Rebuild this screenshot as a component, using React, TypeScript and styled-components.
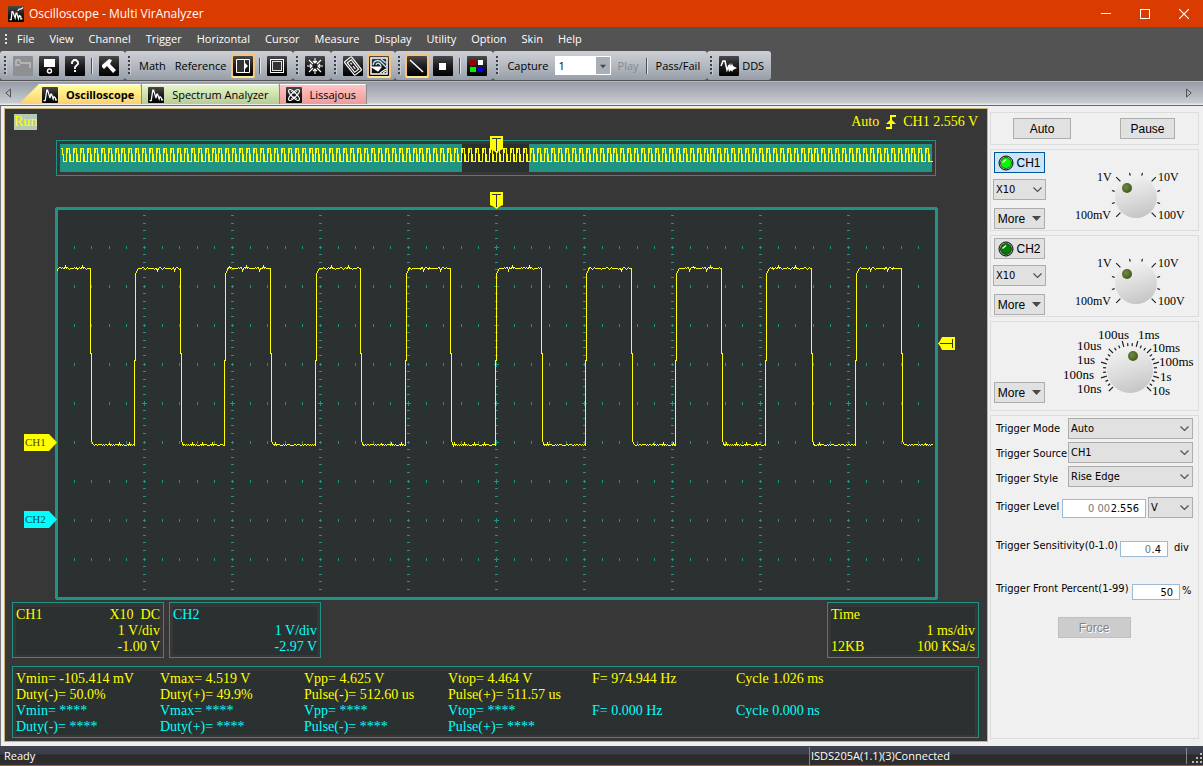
import React from "react";
import styled, { createGlobalStyle } from "styled-components";

const UI = `"Open Sans", "Noto Sans", sans-serif`;
const PANEL = `"DejaVu Sans Condensed", "DejaVu Sans", sans-serif`;
const SANS = `"Liberation Sans", Arial, sans-serif`;
const SERIF = `"Liberation Serif", "Times New Roman", serif`;
const TEAL = "#209384";
const YELLOW = "#ffff00";
const CYAN = "#00ffff";
const PLOT = "#2b3030";
const SCOPE = "#373737";

const GlobalStyle = createGlobalStyle`
  *, *::before, *::after { box-sizing: border-box; }
  body { margin: 0; background: #f0f0f0; font-family: ${UI}; font-size: 11px; color: #000; }
  button, input, select { font: inherit; color: inherit; margin: 0; padding: 0; }
`;

/* ---------- window chrome ---------- */

const Window = styled.div`
  display: flex;
  flex-direction: column;
  min-height: 100vh;
`;

const TitleBar = styled.header`
  display: flex;
  align-items: center;
  height: 27px;
  padding-left: 8px;
  background: #da3b01;
  color: #fff;
`;

const Title = styled.h1`
  flex: 1;
  margin: 0 0 0 5px;
  font-size: 12px;
  font-weight: 400;
  line-height: 16px;
`;

const CaptionButton = styled.button`
  display: flex;
  align-items: center;
  justify-content: center;
  width: 39px;
  height: 27px;
  border: 0;
  background: none;
`;

const MenuBar = styled.nav`
  display: flex;
  align-items: center;
  height: 24px;
  padding-left: 5px;
  background: #535353;
`;

const MenuItem = styled.button`
  height: 20px;
  padding: 0 8px 0 7px;
  border: 0;
  background: none;
  color: #fff;
  font-size: 11px;
  line-height: 20px;
`;

const Grip = styled.span<{ $light?: boolean }>`
  width: 3px;
  height: ${(p) => (p.$light ? 11 : 19)}px;
  margin-right: ${(p) => (p.$light ? 2 : 3)}px;
  background: repeating-linear-gradient(
    to bottom,
    ${(p) => (p.$light ? "#e4e4e4" : "#3c3f44")} 0 2px,
    transparent 2px 4px
  );
  border-right: 1px solid ${(p) => (p.$light ? "#535353" : "#c6cad0")};
`;

/* ---------- tool bar ---------- */

const ToolBar = styled.div`
  display: flex;
  height: 30px;
  padding-bottom: 1px;
  background: #535353;
`;

const ToolGroup = styled.div`
  display: flex;
  align-items: center;
  padding: 0 3px;
  border-radius: 3px;
  background: linear-gradient(#cdd0d5, #b4b9c1 50%, #989ea8);

  &:first-child { padding-left: 4px; }
  &:last-child { padding-right: 7px; }
`;

const ToolButton = styled.button<{ $on?: boolean }>`
  display: flex;
  align-items: center;
  justify-content: center;
  width: 24px;
  height: 24px;
  margin: 0 1px;
  border: ${(p) => (p.$on ? "2px solid #f6c27c" : "0")};
  border-bottom-color: #ffe68c;
  border-radius: 2px;
  background: ${(p) => (p.$on ? "#ffe0a0" : "none")};

  svg { flex: none; display: block; }
`;

const TextButton = styled.button<{ $tight?: boolean }>`
  height: 22px;
  padding: ${(p) => (p.$tight ? "0" : "0 4px 0 5px")};
  border: 0;
  background: none;
  font-size: 11px;
  white-space: nowrap;

  &:disabled { color: #85898f; }
`;

const Separator = styled.span`
  width: 2px;
  height: 16px;
  margin: 0 3px;
  background: #4b4e53;
  border-right: 1px solid #e0e3e7;
`;

const CaptureBox = styled.span`
  display: flex;
  width: 56px;
  height: 19px;
  margin: 0 2px;
  border: 1px solid #fff;
  background: #fff;

  input {
    flex: 1;
    min-width: 0;
    padding-left: 3px;
    border: 0;
    outline: 0;
    background: none;
    font-size: 11px;
  }

  button {
    display: flex;
    justify-content: center;
    width: 14px;
    padding-top: 7px;
    border: 0;
    background: #a9afb7;
  }
`;

/* ---------- tabs ---------- */

const TabStrip = styled.div`
  display: flex;
  align-items: flex-end;
  height: 25px;
  padding: 0 3px 1px 5px;
  border-top: 1px solid #b4b7bb;
  border-bottom: 1px solid #66686c;
  background: linear-gradient(#969ca6, #c9ccd1 21px, #e8eaec 22px);
`;

const ScrollButton = styled.button`
  display: flex;
  align-items: center;
  width: 14px;
  height: 23px;
  border: 0;
  background: none;
`;

const Tab = styled.button<{ $from: string; $to: string; $active?: boolean }>`
  display: flex;
  align-items: center;
  height: 20px;
  padding: ${(p) => (p.$active ? "0 7px 0 23px" : "0 10px 0 6px")};
  border: 0;
  border-top: 1px solid #fff;
  border-right: 1px solid #85888d;
  border-radius: 0 3px 0 0;
  background: linear-gradient(${(p) => p.$from}, ${(p) => p.$to});
  clip-path: ${(p) =>
    p.$active ? "polygon(20px 0, 100% 0, 100% 100%, 0 100%)" : "none"};
  font-size: 11px;
  font-weight: ${(p) => (p.$active ? 700 : 400)};
  white-space: nowrap;

  svg { margin-right: 8px; }
`;

const TabSpace = styled.span`
  flex: 1;
`;

/* ---------- scope ---------- */

const Main = styled.main`
  display: flex;
  flex: 1;
  padding: 2px 0 4px 3px;
  border-left: 1px solid #77797d;
  background: #f0f0f0;
`;

const Scope = styled.section`
  display: flex;
  flex: 1;
  flex-direction: column;
  min-width: 0;
  padding-bottom: 3px;
  border: 1px solid #c9b27c;
  background: ${SCOPE};
  color: ${YELLOW};
  font-family: ${SERIF};
  font-size: 14px;
  line-height: 16px;
`;

const ScopeHeader = styled.div`
  display: flex;
  align-items: center;
  justify-content: space-between;
  height: 25px;
  padding: 0 9px;
`;

const RunState = styled.span`
  background: #b6c9b2;
`;

const TriggerState = styled.span`
  display: flex;
  align-items: center;
  gap: 7px;
`;

const Chart = styled.svg`
  display: block;
  width: 100%;
  height: auto;
  font-family: ${SERIF};
`;

const Readouts = styled.div`
  display: flex;
  gap: 5px;
  padding: 0 8px 8px 7px;
`;

const Readout = styled.div<{ $color: string; $last?: boolean }>`
  display: grid;
  grid-template-columns: auto 1fr;
  grid-template-rows: repeat(3, 16px);
  width: 152px;
  margin-left: ${(p) => (p.$last ? "auto" : "0")};
  padding: 4px 3px 2px;
  border: 1px solid ${TEAL};
  background: ${PLOT} content-box;
  color: ${(p) => p.$color};
  white-space: pre;

  span:nth-child(even) { text-align: right; }
`;

const Measurements = styled.div`
  margin: 0 8px 0 7px;
  padding: 4px 3px 2px;
  border: 1px solid ${TEAL};
  background: ${PLOT} content-box;
`;

const MeasureTable = styled.table`
  width: 100%;
  border-collapse: collapse;
  table-layout: fixed;
  white-space: nowrap;

  td { padding: 0; width: 144px; }
  td:last-child { width: auto; }
`;

const MeasureRow = styled.tr<{ $color: string }>`
  height: 16px;
  color: ${(p) => p.$color};
`;

/* ---------- control panel ---------- */

const Panel = styled.aside`
  display: flex;
  flex: none;
  flex-direction: column;
  gap: 4px;
  width: 215px;
  padding: 4px 4px 3px 2px;
  font-family: ${PANEL};
  font-size: 11px;
`;

const Group = styled.section<{ $grow?: boolean }>`
  display: flex;
  flex: ${(p) => (p.$grow ? 1 : "none")};
  flex-direction: ${(p) => (p.$grow ? "column" : "row")};
  justify-content: ${(p) => (p.$grow ? "flex-start" : "space-between")};
  border: 1px solid #dcdcdc;
`;

const RunGroup = styled(Group)`
  padding: 5px 23px 5px 22px;
`;

const PushButton = styled.button<{ $width: number; $on?: boolean }>`
  display: flex;
  align-items: center;
  justify-content: center;
  gap: 2px;
  width: ${(p) => p.$width}px;
  height: 21px;
  border: 1px solid ${(p) => (p.$on ? "#00559b" : "#adadad")};
  background: ${(p) => (p.$on ? "#cce4f7" : "#e1e1e1")};
  font-family: ${SANS};
  font-size: 12px;
  line-height: 16px;

  &:disabled {
    border-color: #bfbfbf;
    background: #cccccc;
    color: #838383;
    text-shadow: 1px 1px 0 #fff;
  }
`;

const MoreButton = styled(PushButton)`
  gap: 7px;
  margin-top: 2px;
`;

const SideColumn = styled.div<{ $end?: boolean }>`
  display: flex;
  flex-direction: column;
  justify-content: ${(p) => (p.$end ? "flex-end" : "flex-start")};
  align-items: center;
  gap: 6px;
  padding: ${(p) => (p.$end ? "0 0 7px 3px" : "2px 0 0 2px")};
`;

const SelectBox = styled.span<{ $width: number }>`
  display: grid;
  align-items: center;
  width: ${(p) => p.$width}px;
  height: 21px;

  select, svg { grid-area: 1 / 1; }

  select {
    appearance: none;
    width: 100%;
    height: 21px;
    padding: 0 16px 0 2px;
    border: 1px solid #adadad;
    border-radius: 0;
    background: #e1e1e1;
    outline: 0;
  }

  svg {
    justify-self: end;
    margin-right: 4px;
    pointer-events: none;
  }
`;

const Dial = styled.svg`
  display: block;
  margin-right: 1px;
  font-family: ${SERIF};
`;

const TriggerGrid = styled.div`
  display: flex;
  justify-content: space-between;
  padding: 2px 5px 0;
`;

const LabelStack = styled.div`
  display: flex;
  flex-direction: column;
  gap: 9px;
  padding-top: 3px;
`;

const SelectStack = styled.div`
  display: flex;
  flex-direction: column;
  gap: 3px;
`;

const Label = styled.label`
  line-height: 16px;
  white-space: nowrap;
`;

const FieldRow = styled.div<{ $space: number }>`
  display: flex;
  align-items: flex-end;
  gap: 2px;
  margin-top: ${(p) => p.$space}px;
  padding: 0 5px;

  ${Label} {
    margin-right: auto;
    padding-bottom: 3px;
  }
`;

const NumberBox = styled.span<{ $width: number; $tall?: boolean }>`
  display: flex;
  align-items: center;
  justify-content: flex-end;
  width: ${(p) => p.$width}px;
  height: ${(p) => (p.$tall ? 19 : 16)}px;
  padding-right: 6px;
  border: 1px solid #9db9d6;
  background: #fff;
  color: #777;

  input {
    border: 0;
    outline: 0;
    background: none;
    color: #000;
    text-align: right;
  }
`;

const Unit = styled.span<{ $wide?: boolean }>`
  width: ${(p) => (p.$wide ? 23 : 11)}px;
  padding-left: ${(p) => (p.$wide ? 4 : 0)}px;
  line-height: 18px;
`;

const ForceRow = styled.div`
  display: flex;
  justify-content: center;
  margin: 17px 1px 0 0;
`;

/* ---------- status bar ---------- */

const StatusBar = styled.footer`
  display: flex;
  align-items: center;
  height: 20px;
  padding: 1px 0 0 4px;
  border-bottom: 1px solid #c8512b;
  background: linear-gradient(#42444f, #3a3c47 8px, #2a2a2a 9px, #2f2f2f);
  color: #fff;
  font-size: 11px;
  line-height: 18px;
`;

const StatusMessage = styled.span`
  flex: 1;
`;

const StatusDevice = styled.span`
  width: 377px;
  padding-left: 1px;
  border-left: 1px solid #85868c;
`;

const StatusCorner = styled.span`
  display: flex;
  align-items: flex-end;
  justify-content: flex-end;
  width: 17px;
  height: 16px;
  border-left: 1px solid #85868c;
`;

/* ---------- icons ---------- */

const Tile = ({ size = 20, faded, children }: { size?: number; faded?: boolean; children: React.ReactNode }) => (
  <svg width={size} height={size} viewBox="0 0 20 20" fill="none" stroke="#fff" strokeWidth="1.4" aria-hidden="true">
    <defs>
      <linearGradient id="tile" x1="0" y1="0" x2="0" y2="1">
        <stop offset="0" stopColor="#4a4a4a" />
        <stop offset="0.5" stopColor="#1d1d1d" />
        <stop offset="1" stopColor="#000" />
      </linearGradient>
    </defs>
    <rect width="20" height="20" rx="1" fill={faded ? "#8f9091" : "url(#tile)"} stroke="none" />
    {children}
  </svg>
);

const SpectrumIcon = ({ size = 16 }: { size?: number }) => (
  <Tile size={size}>
    <path d="M2 17H4L6 4H7L10 14L11 9H12L14 15L15 12L17 14V16H19" strokeWidth="1.5" />
  </Tile>
);

const LogoIcon = () => (
  <Tile size={16}>
    <path d="M2 17H4L5 7H6L9 15L10 9H11L13 16L14 12L16 13V16H18M12 6L14 4H16L19 2" strokeWidth="1.5" />
  </Tile>
);

const OpenIcon = () => (
  <Tile faded>
    <path d="M3 4H6L8 7H17V12M3 4V9H7" stroke="#b3b4b6" strokeWidth="2" />
  </Tile>
);
const SaveIcon = () => (
  <Tile>
    <rect x="5" y="3" width="11" height="8" fill="#fff" stroke="none" />
    <circle cx="10.500" cy="15" r="2" />
  </Tile>
);
const HelpIcon = () => (
  <Tile>
    <path d="M7 8V6L9 4H11L13 6V8L10 11V13" strokeWidth="1.8" />
    <rect x="9" y="14" width="2" height="2" fill="#fff" stroke="none" />
  </Tile>
);
const HammerIcon = () => (
  <Tile>
    <path d="M3 11L3 9L10 3L13 4L12 6L11 8L17 14L14 17L8 10L5 13Z" fill="#fff" stroke="none" />
  </Tile>
);
const ReferenceIcon = () => (
  <Tile>
    <path d="M4 4H11V16H4Z" fill="#333" stroke="none" />
    <path d="M3.500 3.500H16.500V16.500H3.500ZM11.500 3.500V16.500" strokeWidth="1" />
    <path d="M12 7L15 10L12 13Z" fill="#fff" stroke="none" />
  </Tile>
);
const FrameIcon = () => (
  <Tile>
    <rect x="3.500" y="3.500" width="13" height="13" strokeWidth="1" />
    <rect x="5.500" y="5.500" width="9" height="9" stroke="#ddd" strokeWidth="1" fill="#333" />
  </Tile>
);
const CenterIcon = () => (
  <Tile>
    <path
      d="M10 2V7M10 13V18M2 10H7M13 10H18M4 4L8 8M16 4L12 8M4 16L8 12M16 16L12 12M8 5L10 7L12 5M8 15L10 13L12 15M5 8L7 10L5 12M15 8L13 10L15 12"
      strokeWidth="1.100"
    />
  </Tile>
);
const RulerIcon = () => (
  <Tile>
    <g transform="rotate(-38 10 10)" strokeWidth="1.200">
      <rect x="5.500" y="1.500" width="9" height="17" rx="1" />
      <rect x="7.500" y="4" width="5" height="12" />
      <path d="M10 6V8M10 10V14" />
    </g>
  </Tile>
);
const ZoomWaveIcon = () => (
  <Tile>
    <rect x="2" y="2" width="16" height="16" strokeWidth="1.500" />
    <path d="M4 9C5 4 10 3 13 7L17 11M7 9C8 6 11 7 12 10M12 3L17 7" stroke="#bfe2f7" strokeWidth="1.300" />
    <path d="M3 11H12L9 15ZM11 17L17 13M14 17L17 15" fill="#fff" strokeWidth="1.200" />
  </Tile>
);
const LineIcon = () => (
  <Tile>
    <path d="M3 4L16 16" strokeWidth="1.500" />
  </Tile>
);
const DotIcon = () => (
  <Tile>
    <rect x="6" y="7" width="7" height="7" fill="#fff" stroke="none" />
  </Tile>
);
const ColorsIcon = () => (
  <Tile>
    <g stroke="none">
      <rect x="3" y="4" width="6" height="5" fill="#a00000" />
      <rect x="11" y="4" width="5" height="5" fill="#fff" />
      <rect x="3" y="11" width="6" height="5" fill="#00f000" />
      <rect x="11" y="11" width="5" height="5" fill="#0000f0" />
    </g>
  </Tile>
);
const DdsIcon = () => (
  <Tile>
    <path d="M2 10L4 5H6L8 14L10 9" strokeWidth="1.500" />
    <path d="M9 12L11 7L12 10L13 7L14 10L18 12L14 14L13 16L12 14L10 16Z" fill="#fff" stroke="none" />
  </Tile>
);
const LissajousIcon = () => (
  <Tile size={16}>
    <g strokeWidth="1.500">
      <ellipse cx="10" cy="10" rx="3" ry="9" transform="rotate(45 10 10)" />
      <ellipse cx="10" cy="10" rx="3" ry="9" transform="rotate(-45 10 10)" />
      <path d="M6 5L10 8L14 5M6 15L10 12L14 15" strokeWidth="1" />
    </g>
  </Tile>
);

const Chevron = () => (
  <svg width="9" height="6" viewBox="0 0 9 6" fill="none" stroke="#505050" aria-hidden="true">
    <path d="M0.500 0.500L4.500 4.500L8.500 0.500" strokeWidth="1.200" />
  </svg>
);
const DownArrow = ({ width = 9 }: { width?: number }) => (
  <svg width={width} height="5" viewBox="0 0 9 5" aria-hidden="true">
    <path d="M0 0H9L4.500 5Z" fill="#484848" />
  </svg>
);
const Lamp = ({ color }: { color: string }) => (
  <svg width="16" height="16" viewBox="0 0 16 16" aria-hidden="true">
    <circle cx="8" cy="8" r="7" fill="#c8c8c8" stroke="#000" />
    <circle cx="8" cy="8" r="5.500" fill={color} stroke="#000" strokeWidth="0.600" />
    <path d="M4.500 7.500L8 4.500" stroke="#fff" strokeWidth="1.300" />
  </svg>
);
const RisingEdge = () => (
  <svg width="10" height="14" viewBox="0 0 10 14" fill="none" stroke={YELLOW} strokeWidth="2" aria-hidden="true">
    <path d="M0 13H5V1H10" />
    <path d="M0 9L5 4L10 9Z" fill={YELLOW} stroke="none" />
  </svg>
);

/* ---------- scope chart ---------- */

const HIGH = 134;
const LOW = 310;
const TOP_NOISE = [0, 0, -1, 0, 0, -1, -1, 0, 0, 1, 0, -1, 0, 0, 0, -1, 0, -2, 0, 0, -1, 1, 0, 0, 0, 2, 0, -1, 0];
const LOW_NOISE = [0, 1, 0, 1, 1, 0, -1, 0, 1, 0, 0, 1, 1, 0, 1, 1, 0];

function noisy(from: number, to: number, base: number, noise: number[]) {
  let d = "";
  for (let x = from; x <= to; x += 1) d += `L${x} ${base + noise[(x * 5 + (x >> 3)) % noise.length]}`;
  return d;
}

function signalPath() {
  const rises = [130, 220, 311, 401, 491, 581, 671, 761, 851];
  const falls = [85, 175, 265, 355, 445, 536, 626, 716, 806, 896];
  let d = `M51 ${HIGH + 3}`;
  falls.forEach((fall, i) => {
    if (i > 0) {
      const rise = rises[i - 1];
      d += `L${rise - 1} ${LOW + 1}V226H${rise}V140L${rise + 2} 135`;
      d += noisy(rise + 3, fall - 1, HIGH, TOP_NOISE);
    } else {
      d += noisy(53, fall - 1, HIGH, TOP_NOISE);
    }
    const next = i < rises.length ? rises[i] : 929;
    d += `L${fall} ${HIGH}V219H${fall + 1}V306L${fall + 2} 309`;
    d += noisy(fall + 3, next - 2, LOW, LOW_NOISE);
  });
  return d;
}

function overviewPath() {
  let d = "M55 14H57V20H58V27H61";
  for (let i = 0; i < 125; i++) {
    const x = Math.round(61 + i * 6.93);
    d += `V14H${x + 3}V20H${x + 4}V27H${Math.round(61 + (i + 1) * 6.93)}`;
  }
  return d;
}

function overviewEdges() {
  let d = "";
  for (let i = 0; i < 125; i++) {
    const x = Math.round(61 + i * 6.93);
    d += `M${x + 3} 20V27M${x + 1} 14V18`;
  }
  return d;
}

function gridPath() {
  let d = "";
  for (let c = 1; c < 10; c++) {
    const x = 51 + c * 88;
    for (let i = 1; i < 50; i++) {
      const y = Math.round(74 + i * 7.8) - (i % 5 ? 1 : 0);
      d += `M${x - 1} ${y}h3v1h-3z`;
    }
  }
  for (let r = 1; r < 10; r++) {
    const y = 74 + r * 39;
    for (let i = 1; i < 50; i++) {
      const x = Math.round(51 + i * 17.6);
      d += `M${x} ${y - 1}h1v3h-1z`;
    }
  }
  for (let c = 1; c < 10; c++) d += `M${49 + c * 88} 269h5v1h-5zM${51 + c * 88} 267h1v5h-1z`;
  for (let r = 1; r < 10; r++) d += `M489 ${74 + r * 39}h5v1h-5zM491 ${72 + r * 39}h1v5h-1z`;
  return d;
}

const TriggerFlag = ({ transform }: { transform: string }) => (
  <g transform={transform}>
    <path d="M0 0H13V13L9 15L6.500 17L4 15L0 13Z" fill={YELLOW} />
    <path d="M2 2H11V3H7V15H6V3H2Z" fill="#373737" />
  </g>
);

const ChannelTag = ({ y, color, label, ink }: { y: number; color: string; label: string; ink: string }) => (
  <g>
    <path d={`M19 ${y}H44L52 ${y + 8.5}L44 ${y + 17}H19Z`} fill={color} />
    <text x="20" y={y + 12} fontSize="11" fill={ink}>
      {label}
    </text>
  </g>
);

const ScopeChart = () => (
  <Chart viewBox="0 0 982 468" role="img" aria-label="Channel 1 waveform">
    <g shapeRendering="crispEdges">
      <rect x="51.500" y="6.500" width="879" height="35" fill="none" stroke={TEAL} />
      <rect x="55" y="10" width="872" height="28" fill={TEAL} />
      <rect x="457" y="10" width="67" height="28" fill={PLOT} />
      <rect x="51.500" y="74.500" width="880" height="390" fill={PLOT} stroke={TEAL} strokeWidth="3" strokeLinejoin="bevel" />
      <path d={gridPath()} fill={TEAL} />
    </g>
    <g fill="none" stroke={YELLOW} shapeRendering="crispEdges" transform="translate(0.500 0.500)">
      <path d={overviewPath()} />
      <path d={overviewEdges()} />
      <path d={signalPath()} />
    </g>
    <TriggerFlag transform="translate(485 2)" />
    <TriggerFlag transform="translate(485 58)" />
    <TriggerFlag transform="translate(950 203) rotate(90)" />
    <ChannelTag y={300} color={YELLOW} ink="#4d4d00" label="CH1" />
    <ChannelTag y={377} color={CYAN} ink="#00494d" label="CH2" />
  </Chart>
);

/* ---------- dials ---------- */

type Tick = { angle: number; major: boolean };

const polar = (cx: number, cy: number, r: number, angle: number) => {
  const a = (angle * Math.PI) / 180;
  return `${(cx + r * Math.sin(a)).toFixed(1)} ${(cy - r * Math.cos(a)).toFixed(1)}`;
};

function ticks(step: number, isMajor: (a: number) => boolean): Tick[] {
  const out: Tick[] = [];
  for (let a = -135; a <= 135; a += step) out.push({ angle: a, major: isMajor(a) });
  return out;
}

type DialProps = {
  height: number;
  cx: number;
  cy: number;
  radius: number;
  marks: Tick[];
  pointer: [number, number];
  labels: [string, number, number][];
  fontSize: number;
};

const DialKnob = ({ height, cx, cy, radius, marks, pointer, labels, fontSize }: DialProps) => (
  <Dial width="136" height={height} viewBox={`0 0 136 ${height}`}>
    <defs>
      <linearGradient id="knob" x1="0.2" y1="0" x2="0.5" y2="1">
        <stop offset="0" stopColor="#f4f4f4" />
        <stop offset="0.6" stopColor="#dadada" />
        <stop offset="1" stopColor="#c6c6c6" />
      </linearGradient>
      <radialGradient id="pointer" cx="0.4" cy="0.4" r="0.6">
        <stop offset="0" stopColor="#6f8a46" />
        <stop offset="1" stopColor="#435c1c" />
      </radialGradient>
    </defs>
    <path
      d={marks
        .map((m) => `M${polar(cx, cy, radius + 1, m.angle)}L${polar(cx, cy, radius + (m.major ? 7 : 4), m.angle)}`)
        .join("")}
      stroke="#222"
      strokeWidth="1.200"
    />
    <circle cx={cx} cy={cy} r={radius} fill="url(#knob)" />
    <circle cx={cx + pointer[0]} cy={cy + pointer[1]} r="5" fill="url(#pointer)" />
    {labels.map(([text, x, y]) => (
      <text key={text} x={x} y={y} fontSize={fontSize}>
        {text}
      </text>
    ))}
  </Dial>
);

const VoltDial = () => (
  <DialKnob
    height={80}
    cx={75}
    cy={47}
    radius={21}
    marks={ticks(30, (a) => Math.abs(a) === 135 || Math.abs(a) === 45)}
    pointer={[-9, -9]}
    fontSize={12}
    labels={[
      ["1V", 36, 31],
      ["10V", 97, 31],
      ["100mV", 14, 69],
      ["100V", 97, 69],
    ]}
  />
);

const TimeDial = () => (
  <DialKnob
    height={88}
    cx={69}
    cy={48}
    radius={23}
    marks={ticks(10, (a) => (a + 135) % 30 === 0)}
    pointer={[3, -14]}
    fontSize={13}
    labels={[
      ["100us", 37, 17],
      ["1ms", 77, 17],
      ["10us", 16, 28],
      ["10ms", 91, 30],
      ["1us", 16, 42],
      ["100ms", 98, 44],
      ["100ns", 2, 57],
      ["1s", 99, 59],
      ["10ns", 16, 71],
      ["10s", 91, 73],
    ]}
  />
);

/* ---------- panel pieces ---------- */

const Select = ({ id, label, width, options }: { id: string; label?: string; width: number; options: string[] }) => (
  <SelectBox $width={width}>
    <select id={id} aria-label={label}>
      {options.map((o) => (
        <option key={o}>{o}</option>
      ))}
    </select>
    <Chevron />
  </SelectBox>
);

const More = () => (
  <MoreButton $width={51}>
    More
    <DownArrow />
  </MoreButton>
);

const Channel = ({ name, on }: { name: string; on?: boolean }) => (
  <Group>
    <SideColumn>
      <PushButton $width={51} $on={on} aria-pressed={!!on}>
        <Lamp color={on ? "#00ff00" : "#008000"} />
        {name}
      </PushButton>
      <Select id={`probe-${name}`} label={`${name} probe`} width={53} options={["X10", "X1"]} />
      <More />
    </SideColumn>
    <VoltDial />
  </Group>
);

const MENUS = ["File", "View", "Channel", "Trigger", "Horizontal", "Cursor", "Measure", "Display", "Utility", "Option", "Skin", "Help"];

const MEASURES: { color: string; cells: string[] }[] = [
  { color: YELLOW, cells: ["Vmin= -105.414 mV", "Vmax= 4.519 V", "Vpp= 4.625 V", "Vtop= 4.464 V", "F= 974.944 Hz", "Cycle 1.026 ms"] },
  { color: YELLOW, cells: ["Duty(-)= 50.0%", "Duty(+)= 49.9%", "Pulse(-)= 512.60 us", "Pulse(+)= 511.57 us", "", ""] },
  { color: CYAN, cells: ["Vmin= ****", "Vmax= ****", "Vpp= ****", "Vtop= ****", "F= 0.000 Hz", "Cycle 0.000 ns"] },
  { color: CYAN, cells: ["Duty(-)= ****", "Duty(+)= ****", "Pulse(-)= ****", "Pulse(+)= ****", "", ""] },
];

export default function App() {
  return (
    <Window>
      <GlobalStyle />
      <TitleBar>
        <LogoIcon />
        <Title>Oscilloscope - Multi VirAnalyzer</Title>
        <CaptionButton aria-label="Minimize">
          <svg width="10" height="10" viewBox="0 0 10 10" stroke="#fff">
            <path d="M0 4.500H10" />
          </svg>
        </CaptionButton>
        <CaptionButton aria-label="Maximize">
          <svg width="10" height="10" viewBox="0 0 10 10" stroke="#fff" fill="none">
            <rect x="0.500" y="0.500" width="9" height="9" />
          </svg>
        </CaptionButton>
        <CaptionButton aria-label="Close">
          <svg width="10" height="10" viewBox="0 0 10 10" stroke="#fff" strokeWidth="1.200">
            <path d="M0 0L10 10M10 0L0 10" />
          </svg>
        </CaptionButton>
      </TitleBar>

      <MenuBar>
        <Grip $light />
        {MENUS.map((m) => (
          <MenuItem key={m}>{m}</MenuItem>
        ))}
      </MenuBar>

      <ToolBar role="toolbar">
        <ToolGroup>
          <Grip />
          <ToolButton aria-label="Open" disabled><OpenIcon /></ToolButton>
          <ToolButton aria-label="Save"><SaveIcon /></ToolButton>
          <ToolButton aria-label="Help"><HelpIcon /></ToolButton>
          <Separator />
          <ToolButton aria-label="Settings"><HammerIcon /></ToolButton>
        </ToolGroup>
        <ToolGroup>
          <Grip />
          <TextButton>Math</TextButton>
          <TextButton>Reference</TextButton>
          <ToolButton aria-label="Side panel" $on><ReferenceIcon /></ToolButton>
          <Separator />
          <ToolButton aria-label="Full screen"><FrameIcon /></ToolButton>
        </ToolGroup>
        <ToolGroup>
          <Grip />
          <ToolButton aria-label="Center"><CenterIcon /></ToolButton>
        </ToolGroup>
        <ToolGroup>
          <Grip />
          <ToolButton aria-label="Measure"><RulerIcon /></ToolButton>
          <ToolButton aria-label="Overview" $on><ZoomWaveIcon /></ToolButton>
        </ToolGroup>
        <ToolGroup>
          <Grip />
          <ToolButton aria-label="Lines" $on><LineIcon /></ToolButton>
          <ToolButton aria-label="Dots"><DotIcon /></ToolButton>
          <Separator />
          <ToolButton aria-label="Colors"><ColorsIcon /></ToolButton>
        </ToolGroup>
        <ToolGroup>
          <Grip />
          <TextButton>Capture</TextButton>
          <CaptureBox>
            <input aria-label="Capture count" defaultValue="1" />
            <button aria-label="Capture list"><DownArrow width={6} /></button>
          </CaptureBox>
          <TextButton disabled>Play</TextButton>
          <Separator />
          <TextButton>Pass/Fail</TextButton>
        </ToolGroup>
        <ToolGroup>
          <Grip />
          <ToolButton aria-label="Signal generator"><DdsIcon /></ToolButton>
          <TextButton $tight>DDS</TextButton>
        </ToolGroup>
      </ToolBar>

      <TabStrip role="tablist">
        <ScrollButton aria-label="Previous tab">
          <svg width="6" height="10" viewBox="0 0 6 10" fill="none" stroke="#505358">
            <path d="M5.500 1L0.800 5L5.500 9Z" />
          </svg>
        </ScrollButton>
        <Tab role="tab" aria-selected $active $from="#ffff98" $to="#fdd070">
          <SpectrumIcon />
          Oscilloscope
        </Tab>
        <Tab role="tab" $from="#e6f6c8" $to="#b8cc96">
          <SpectrumIcon />
          Spectrum Analyzer
        </Tab>
        <Tab role="tab" $from="#ffc4c4" $to="#f09a9a">
          <LissajousIcon />
          Lissajous
        </Tab>
        <TabSpace />
        <ScrollButton aria-label="Next tab">
          <svg width="6" height="10" viewBox="0 0 6 10" fill="none" stroke="#505358">
            <path d="M0.500 1L5.200 5L0.500 9Z" />
          </svg>
        </ScrollButton>
      </TabStrip>

      <Main>
        <Scope>
          <ScopeHeader>
            <RunState>Run</RunState>
            <TriggerState>
              <span>Auto</span>
              <RisingEdge />
              <span>CH1 2.556 V</span>
            </TriggerState>
          </ScopeHeader>
          <ScopeChart />
          <Readouts>
            <Readout $color={YELLOW}>
              <span>CH1</span><span>{"X10  DC"}</span>
              <span /><span>1 V/div</span>
              <span /><span>-1.00 V</span>
            </Readout>
            <Readout $color={CYAN}>
              <span>CH2</span><span />
              <span /><span>1 V/div</span>
              <span /><span>-2.97 V</span>
            </Readout>
            <Readout $color={YELLOW} $last>
              <span>Time</span><span />
              <span /><span>1 ms/div</span>
              <span>12KB</span><span>100 KSa/s</span>
            </Readout>
          </Readouts>
          <Measurements>
            <MeasureTable>
              <tbody>
                {MEASURES.map((row, i) => (
                  <MeasureRow key={i} $color={row.color}>
                    {row.cells.map((c, j) => (
                      <td key={j}>{c}</td>
                    ))}
                  </MeasureRow>
                ))}
              </tbody>
            </MeasureTable>
          </Measurements>
        </Scope>

        <Panel>
          <RunGroup>
            <PushButton $width={58}>Auto</PushButton>
            <PushButton $width={55}>Pause</PushButton>
          </RunGroup>
          <Channel name="CH1" on />
          <Channel name="CH2" />
          <Group>
            <SideColumn $end>
              <More />
            </SideColumn>
            <TimeDial />
          </Group>
          <Group $grow>
            <TriggerGrid>
              <LabelStack>
                <Label htmlFor="trigger-mode">Trigger Mode</Label>
                <Label htmlFor="trigger-source">Trigger Source</Label>
                <Label htmlFor="trigger-style">Trigger Style</Label>
              </LabelStack>
              <SelectStack>
                <Select id="trigger-mode" width={125} options={["Auto", "Normal", "Single"]} />
                <Select id="trigger-source" width={125} options={["CH1", "CH2"]} />
                <Select id="trigger-style" width={125} options={["Rise Edge", "Fall Edge"]} />
              </SelectStack>
            </TriggerGrid>
            <FieldRow $space={10}>
              <Label htmlFor="trigger-level">Trigger Level</Label>
              <NumberBox $width={84} $tall>
                0 00
                <input id="trigger-level" defaultValue="2.556" size={4} style={{ width: 29 }} />
              </NumberBox>
              <Select id="level-unit" label="Trigger level unit" width={45} options={["V", "mV"]} />
            </FieldRow>
            <FieldRow $space={20}>
              <Label htmlFor="trigger-sensitivity">Trigger Sensitivity(0-1.0)</Label>
              <NumberBox $width={48}>
                0
                <input id="trigger-sensitivity" defaultValue=".4" style={{ width: 10 }} />
              </NumberBox>
              <Unit $wide>div</Unit>
            </FieldRow>
            <FieldRow $space={24}>
              <Label htmlFor="trigger-front">Trigger Front Percent(1-99)</Label>
              <NumberBox $width={48}>
                <input id="trigger-front" defaultValue="50" style={{ width: 30 }} />
              </NumberBox>
              <Unit>%</Unit>
            </FieldRow>
            <ForceRow>
              <PushButton $width={73} disabled>Force</PushButton>
            </ForceRow>
          </Group>
        </Panel>
      </Main>

      <StatusBar>
        <StatusMessage>Ready</StatusMessage>
        <StatusDevice>ISDS205A(1.1)(3)Connected</StatusDevice>
        <StatusCorner>
          <svg width="12" height="12" viewBox="0 0 12 12" fill="#b8b8b8" aria-hidden="true">
            <path d="M9 1h2v2H9zM9 5h2v2H9zM5 5h2v2H5zM9 9h2v2H9zM5 9h2v2H5zM1 9h2v2H1z" />
          </svg>
        </StatusCorner>
      </StatusBar>
    </Window>
  );
}
